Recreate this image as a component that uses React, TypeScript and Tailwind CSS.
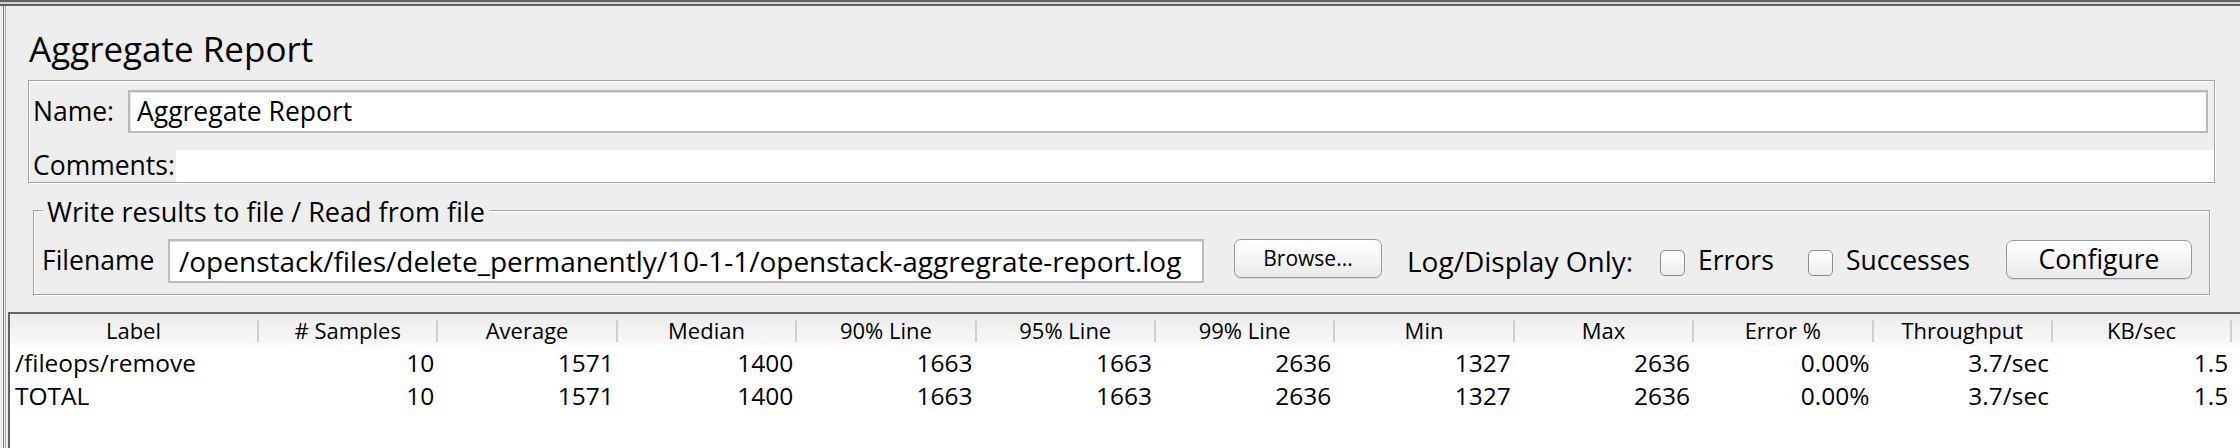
const headers = ['Label', '# Samples', 'Average', 'Median', '90% Line', '95% Line', '99% Line', 'Min', 'Max', 'Error %', 'Throughput', 'KB/sec'];

const rows = [
  ['/fileops/remove', '10', '1571', '1400', '1663', '1663', '2636', '1327', '2636', '0.00%', '3.7/sec', '1.5'],
  ['TOTAL', '10', '1571', '1400', '1663', '1663', '2636', '1327', '2636', '0.00%', '3.7/sec', '1.5'],
];

const Checkbox = () => (
  <div className="w-[25px] h-[26px] rounded-[5px] border border-[#8e8e8e] bg-gradient-to-b from-white to-[#ededed] shadow-[inset_0_1px_0_#fff]" />
);

const AquaButton = ({ label, className }: { label: string; className: string }) => (
  <div
    className={`flex items-center justify-center rounded-[7px] border border-[#9a9a9a] bg-gradient-to-b from-white to-[#eaeaea] shadow-[0_1px_0_#d6d6d6] ${className}`}
  >
    {label}
  </div>
);

export default function App() {
  return (
    <div
      className="w-[2240px] h-[448px] bg-[#eeeeee] overflow-hidden flex flex-col text-black"
      style={{ fontFamily: '"Open Sans", "DejaVu Sans", sans-serif' }}
    >
      <div className="h-[2px] bg-[#626262]" />
      <div className="h-[2px] bg-[#d2d2d2]" />
      <div className="h-[2px] bg-[#626262]" />

      <div className="flex-1 flex">
        <div className="w-[7px] flex">
          <div className="ml-[3px] w-px bg-[#7c7c7c]" />
          <div className="ml-[1px] w-px bg-[#aaaaaa]" />
        </div>

        <div className="flex-1 flex flex-col">
          {/* title */}
          <div className="mt-[23px] h-[40px] leading-[40px] pl-[22px] text-[35px]">Aggregate Report</div>

          {/* name / comments */}
          <div className="mt-[11px] ml-[21px] w-[2187px] border border-[#a4a4a4] shadow-[1px_1px_0_#fff,inset_1px_1px_0_#fff] pt-[9px] pl-[4px] text-[26.5px]">
            <div className="h-[43px] flex items-center">
              <div className="w-[95px]">Name:</div>
              <div className="w-[2080px] h-[43px] border-2 border-[#b9b9b9] bg-white shadow-[inset_0_1px_0_#dcdcdc,inset_1px_0_0_#e4e4e4] flex items-center pl-[7px]">
                Aggregate Report
              </div>
            </div>
            <div className="mt-[17px] h-[32px] flex items-center">
              <div className="w-[143px]">Comments:</div>
              <div className="flex-1 h-[32px] bg-white" />
            </div>
          </div>

          {/* write results */}
          <div className="relative mt-[27px] ml-[26px] w-[2177px] h-[85px] border border-[#a4a4a4] shadow-[1px_1px_0_#fff,inset_1px_1px_0_#fff] pt-[28px] pl-[8px] text-[26.5px]">
            <div className="absolute left-[9px] top-[-14px] h-[30px] leading-[30px] px-[4px] bg-[#eeeeee] text-[27px]">
              Write results to file / Read from file
            </div>
            <div className="h-[44px] flex items-center">
              <div className="w-[126px]">Filename</div>
              <div className="w-[1036px] h-[44px] border-2 border-[#bcbcbc] bg-white shadow-[inset_0_1px_0_#dcdcdc] flex items-center pl-[9px] text-[28px] overflow-hidden whitespace-nowrap">
                /openstack/files/delete_permanently/10-1-1/openstack-aggregrate-report.log
              </div>
              <AquaButton label="Browse..." className="ml-[30px] w-[148px] h-[39px] text-[21px] -mt-[5px]" />
              <div className="ml-[25px] w-[229px] text-[28px] whitespace-nowrap">Log/Display Only:</div>
              <div className="ml-[24px] mt-[3px]">
                <Checkbox />
              </div>
              <div className="ml-[13px] w-[71px]">Errors</div>
              <div className="ml-[39px] mt-[3px]">
                <Checkbox />
              </div>
              <div className="ml-[13px] w-[124px] whitespace-nowrap">Successes</div>
              <AquaButton label="Configure" className="ml-[36px] w-[186px] h-[39px] -mt-[3px]" />
            </div>
          </div>

          {/* table */}
          <div className="mt-[17px] ml-[1px] flex-1 border-t-2 border-l-2 border-[#646464] bg-white flex flex-col">
            <div className="h-[31px] grid grid-cols-[249px_repeat(11,179.4px)] bg-gradient-to-b from-[#ebebeb] to-[#f9f9f9] text-[22px]">
              {headers.map((h) => (
                <div key={h} className="flex items-center">
                  <div className="flex-1 text-center whitespace-nowrap">{h}</div>
                  <div className="w-[2px] h-[22px] bg-[#cfcfcf]" />
                </div>
              ))}
            </div>
            {rows.map((r, i) => (
              <div key={i} className="h-[33px] grid grid-cols-[249px_repeat(11,179.4px)] text-[24.5px]">
                {r.map((c, j) => (
                  <div
                    key={j}
                    className={`flex items-center whitespace-nowrap ${j === 0 ? 'pl-[5px]' : 'justify-end pr-[4px]'}`}
                  >
                    {c}
                  </div>
                ))}
              </div>
            ))}
          </div>
        </div>
      </div>
    </div>
  );
}
